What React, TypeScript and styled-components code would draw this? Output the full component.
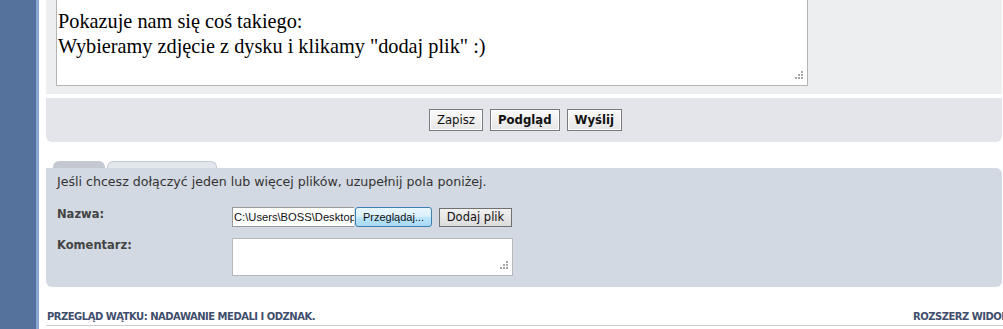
import React from "react";
import styled, { createGlobalStyle } from "styled-components";

const Global = createGlobalStyle`
  html, body { margin: 0; padding: 0; background: #fff; overflow: hidden; }
  body { width: 1003px; height: 329px; }
`;

const Page = styled.div`
  display: flex;
  width: 1003px;
  height: 329px;
  overflow: hidden;
`;

const Sidebar = styled.div`
  width: 36px;
  flex: none;
  background: #55729c;
  border-right: 3px solid #88a7d3;
`;

const Content = styled.div`
  flex: 1;
  min-width: 0;
  padding: 0 1px 0 7px;
  display: flex;
  flex-direction: column;
`;

const EditorPanel = styled.div`
  background: #edeef0;
  padding: 0 0 8px 10px;
  height: 94px;
  box-sizing: border-box;
`;

const Editor = styled.div`
  position: relative;
  width: 752px;
  height: 86px;
  box-sizing: border-box;
  background: #fff;
  border: 1px solid #b4b4b4;
  border-top: none;
  padding: 9px 0 0 1px;
  font-family: "Liberation Serif", "Times New Roman", serif;
  font-size: 20.3px;
  line-height: 25px;
  color: #000;
`;

const Grip = styled.svg`
  position: absolute;
  right: 4px;
  bottom: 4px;
`;

const ButtonBar = styled.div`
  margin-top: 4px;
  height: 44px;
  background: #e3e5ea;
  border-radius: 0 0 6px 6px;
  display: flex;
  justify-content: center;
  align-items: center;
  gap: 7px;
  padding-left: 3px;
`;

const FormButton = styled.button<{ $bold?: boolean }>`
  height: 22px;
  padding: 0 7px;
  font-family: "DejaVu Sans", Verdana, sans-serif;
  font-size: 11.7px;
  font-weight: ${(p) => (p.$bold ? 700 : 400)};
  color: #111;
  background: linear-gradient(#fafafa, #e6e6e6);
  border: 1px solid #7a7a7a;
  box-shadow: inset 0 0 0 1px #fff;
  cursor: pointer;
`;

const TabRow = styled.div`
  margin-top: 19px;
  display: flex;
  align-items: flex-end;
  gap: 2px;
  padding-left: 7px;
  height: 7px;
`;

const Tab = styled.div<{ $w: number; $active?: boolean }>`
  width: ${(p) => p.$w}px;
  height: 7px;
  box-sizing: border-box;
  border-radius: 6px 6px 0 0;
  background: ${(p) => (p.$active ? "#c4c8d0" : "#e2e7ee")};
  border: ${(p) => (p.$active ? "none" : "1px solid #c3cbd6")};
  border-bottom: none;
`;

const AttachPanel = styled.div`
  height: 119px;
  box-sizing: border-box;
  background: #d3d9e2;
  border-radius: 0 6px 6px 6px;
  padding: 6px 0 0 11px;
  font-family: "DejaVu Sans", Verdana, sans-serif;
  color: #333;
`;

const Intro = styled.div`
  font-size: 12.6px;
  line-height: 16px;
`;

const FieldRow = styled.div<{ $top: number }>`
  display: grid;
  grid-template-columns: 175px auto;
  align-items: start;
  margin-top: ${(p) => p.$top}px;
`;

const Label = styled.div`
  font-size: 11.5px;
  font-weight: 700;
  color: #444;
`;

const FileRow = styled.div`
  display: flex;
  align-items: center;
`;

const FilePath = styled.div`
  width: 122px;
  height: 20px;
  box-sizing: border-box;
  background: #fff;
  border: 1px solid #9a9a9a;
  border-right: none;
  font-family: "Liberation Sans", Arial, sans-serif;
  font-size: 11.2px;
  line-height: 18px;
  padding-left: 1px;
  color: #111;
  white-space: nowrap;
  overflow: hidden;
`;

const Browse = styled.button`
  width: 77px;
  height: 20px;
  margin-left: 1px;
  border: 1px solid #3c7fb1;
  border-radius: 3px;
  background: linear-gradient(#eaf6fd 0%, #d9f0fc 50%, #bee6fd 51%, #a7d9f5 100%);
  font-family: "Liberation Sans", Arial, sans-serif;
  font-size: 11px;
  color: #111;
  padding: 0;
`;

const AddFile = styled.button`
  margin-left: 7px;
  width: 73px;
  height: 19px;
  border: 1px solid #707070;
  background: linear-gradient(#f2f2f2, #dcdcdc);
  font-family: "DejaVu Sans", Verdana, sans-serif;
  font-size: 11.5px;
  color: #111;
  padding: 0;
`;

const Comment = styled.div`
  position: relative;
  width: 281px;
  height: 38px;
  box-sizing: border-box;
  background: #fff;
  border: 1px solid #b8b8b8;
`;

const Heading = styled.div`
  margin-top: 22px;
  height: 14px;
  padding-top: 2px;
  border-bottom: 1px solid #cfcfcf;
  margin-right: -2px;
  font-family: "DejaVu Sans", Verdana, sans-serif;
  font-size: 10px;
  font-weight: 700;
  color: #3f4e6d;
  letter-spacing: -0.5px;
  display: flex;
  justify-content: space-between;
  white-space: nowrap;
  padding-left: 1px;
`;

const Expand = styled.span`
  width: 91px;
  overflow: hidden;
`;

const GripIcon = () => (
  <Grip width="10" height="10" viewBox="0 0 10 10">
    {[
      [8, 0],
      [5, 3],
      [8, 3],
      [2, 6],
      [5, 6],
      [8, 6],
    ].map(([x, y], i) => (
      <rect key={i} x={x} y={y} width="2" height="2" fill="#a8a8a8" />
    ))}
  </Grip>
);

export default function App() {
  return (
    <Page>
      <Global />
      <Sidebar />
      <Content>
        <EditorPanel>
          <Editor>
            Pokazuje nam się coś takiego:
            <br />
            Wybieramy zdjęcie z dysku i klikamy "dodaj plik" :)
            <GripIcon />
          </Editor>
        </EditorPanel>
        <ButtonBar>
          <FormButton>Zapisz</FormButton>
          <FormButton $bold>Podgląd</FormButton>
          <FormButton $bold>Wyślij</FormButton>
        </ButtonBar>
        <TabRow>
          <Tab $w={52} $active />
          <Tab $w={110} />
        </TabRow>
        <AttachPanel>
          <Intro>Jeśli chcesz dołączyć jeden lub więcej plików, uzupełnij pola poniżej.</Intro>
          <FieldRow $top={17}>
            <Label>Nazwa:</Label>
            <FileRow>
              <FilePath>C:\Users\BOSS\Desktop\zdjecie.jpg</FilePath>
              <Browse>Przeglądaj...</Browse>
              <AddFile>Dodaj plik</AddFile>
            </FileRow>
          </FieldRow>
          <FieldRow $top={11}>
            <Label>Komentarz:</Label>
            <Comment>
              <GripIcon />
            </Comment>
          </FieldRow>
        </AttachPanel>
        <Heading>
          <span>PRZEGLĄD WĄTKU: NADAWANIE MEDALI I ODZNAK.</span>
          <Expand>ROZSZERZ WIDOK</Expand>
        </Heading>
      </Content>
    </Page>
  );
}
